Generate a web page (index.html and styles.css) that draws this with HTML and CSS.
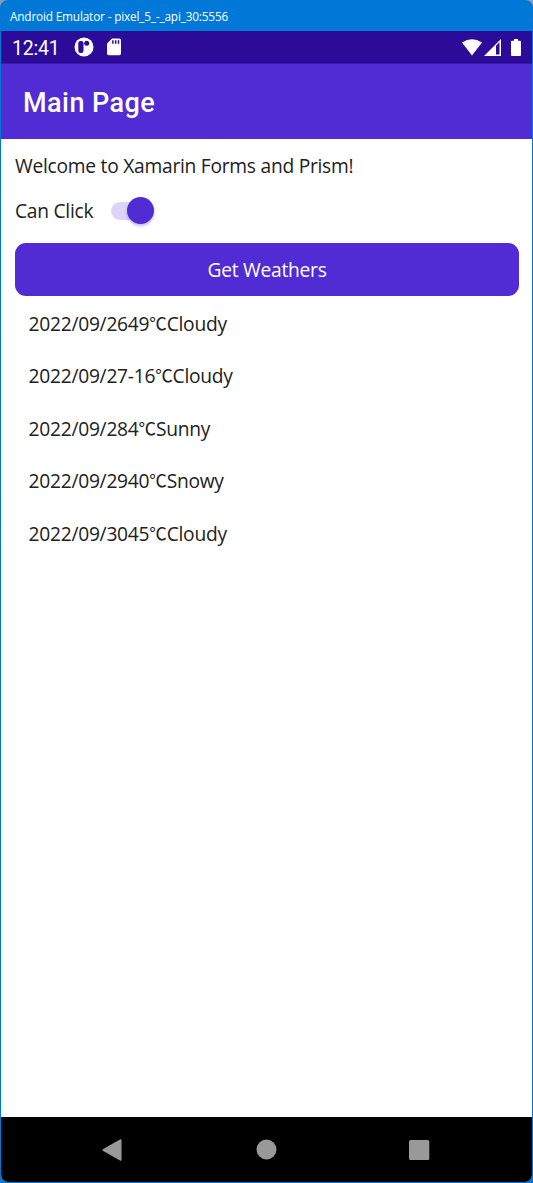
FILE: index.html
```html
<!DOCTYPE html>
<html lang="en">
<head>
<meta charset="utf-8">
<title>Main Page</title>
<link rel="stylesheet" href="styles.css">
</head>
<body>
<div class="window">
  <header class="titlebar"><span class="window-title">Android Emulator - pixel_5_-_api_30:5556</span></header>
  <div class="screen">
    <div class="status">
      <span class="clock">12:41</span>
      <svg class="app-icon" width="20" height="20" viewBox="0 0 20 20"><circle cx="10" cy="10" r="9.5" fill="#fff"/><rect x="4.3" y="4" width="5.2" height="12" rx="2.2" fill="#2b0b98"/><circle cx="12.700" cy="6.200" r="2.500" fill="#2b0b98"/></svg>
      <svg class="sd-icon" width="14" height="18" viewBox="0 0 14 18"><path d="M5 .5h7.2Q14 .5 14 2.2v13.4q0 1.7-1.8 1.7H1.8Q0 17.300 0 15.600V5.500z" fill="#fff"/><path d="M5.900 2.200v3.500M8.700 2.200v3.500M11.500 2.200v3.500" stroke="#2b0b98" stroke-width="1.500"/></svg>
      <div class="signals">
        <svg width="20" height="17" viewBox="0 0 20 17"><path d="M0 3.500Q10-2.800 20 3.500L10 16.500z" fill="#fff"/></svg>
        <svg width="17" height="17" viewBox="0 0 17 17"><path fill-rule="evenodd" d="M0 17L17 0v17zM12 6.800V15.500h3.500V3.300z" fill="#fff"/></svg>
        <svg class="battery" width="10" height="17" viewBox="0 0 10 17"><path d="M3 0h4v1.700h2q1 0 1 1V16q0 1-1 1H1q-1 0-1-1V2.700q0-1 1-1h2z" fill="#fff"/></svg>
      </div>
    </div>
    <div class="appbar"><h1>Main Page</h1></div>
    <main class="content">
      <p class="welcome">Welcome to Xamarin Forms and Prism!</p>
      <div class="option"><span class="label">Can Click</span><span class="switch"><span class="thumb"></span></span></div>
      <button class="fetch">Get Weathers</button>
      <ul class="weather">
        <li>2022/09/2649<span class="degree">℃</span>Cloudy</li>
        <li>2022/09/27-16<span class="degree">℃</span>Cloudy</li>
        <li>2022/09/284<span class="degree">℃</span>Sunny</li>
        <li>2022/09/2940<span class="degree">℃</span>Snowy</li>
        <li>2022/09/3045<span class="degree">℃</span>Cloudy</li>
      </ul>
    </main>
    <nav class="navbar">
      <svg width="22" height="24" viewBox="0 0 22 24"><path d="M2.200 12L19.800 2v20z" fill="#999" stroke="#999" stroke-width="1.500" stroke-linejoin="round"/></svg>
      <svg width="22" height="24" viewBox="0 0 22 24"><circle cx="11.500" cy="11.500" r="10" fill="#999"/></svg>
      <svg width="22" height="24" viewBox="0 0 22 24"><rect x="1" y="2" width="20.300" height="20" rx="1.500" fill="#999"/></svg>
    </nav>
  </div>
</div>
</body>
</html>
```
FILE: styles.css
```css
* { box-sizing: border-box; }
body { margin: 0; background: #8b9db0; font-family: "Open Sans", "Noto Sans CJK SC", sans-serif; color: #212121; }
.window { width: 533px; height: 1183px; display: flex; flex-direction: column; padding: 0 1px 1px; background: #0078d7; border-radius: 8px 8px 0 0; overflow: hidden; }
.titlebar { height: 31px; flex: none; padding-left: 9px; line-height: 32px; color: #fff; font-size: 11.800px; letter-spacing: -.170px; }
.window-title { white-space: nowrap; }
.screen { flex: 1; display: flex; flex-direction: column; background: #fff; border-radius: 0 0 7px 7px; overflow: hidden; }
.status { height: 33px; flex: none; display: flex; align-items: center; padding: 0 11px; background: #2b0b98; border-bottom: 1px solid #3b18ae; }
.clock { width: 62px; padding-top: 2px; color: #fff; font: 19.500px/33px Roboto, sans-serif; letter-spacing: -.200px; }
.sd-icon { margin-left: 13px; }
.signals { display: flex; align-items: center; margin-left: auto; }
.signals svg { margin-right: 2px; }
.signals .battery { margin: 0 0 0 8px; }
.appbar { height: 75px; flex: none; display: flex; align-items: center; padding: 3px 0 0 22px; background: #512bd4; }
.appbar h1 { margin: 0; color: #fff; font: 500 27px/36px Roboto, sans-serif; letter-spacing: .45px; }
.content { flex: 1; display: flex; flex-direction: column; padding: 14px 13px 0 14px; font-size: 19.200px; letter-spacing: -.250px; }
.welcome { height: 26px; margin: 0; line-height: 26px; white-space: nowrap; }
.option { height: 27px; margin-top: 18.400px; display: flex; align-items: center; line-height: 27px; }
.label { width: 78px; white-space: nowrap; }
.switch { width: 43px; height: 18px; margin-left: 18px; display: flex; align-items: center; justify-content: flex-end; border-radius: 9px; background: linear-gradient(#dcd5f6, #dcd5f6) left / 30px no-repeat; }
.thumb { flex: none; width: 27px; height: 27px; border-radius: 50%; background: #512bd4; box-shadow: 0 2px 3px rgba(81, 43, 212, .35); }
.fetch { height: 53px; flex: none; margin: 19px 0 0; padding: 0; border: 0; border-radius: 11px; background: #512bd4; color: #fff; font: inherit; letter-spacing: inherit; }
.weather { margin: 1.200px 0 0; padding: 0 0 0 13.500px; list-style: none; }
.weather li { height: 52.600px; line-height: 52.600px; }
.degree { position: relative; top: -1px; font-size: 17.600px; line-height: 1; }
.navbar { height: 65px; flex: none; display: flex; align-items: center; justify-content: space-between; padding: 0 102px 0 100px; background: #000; }
```
